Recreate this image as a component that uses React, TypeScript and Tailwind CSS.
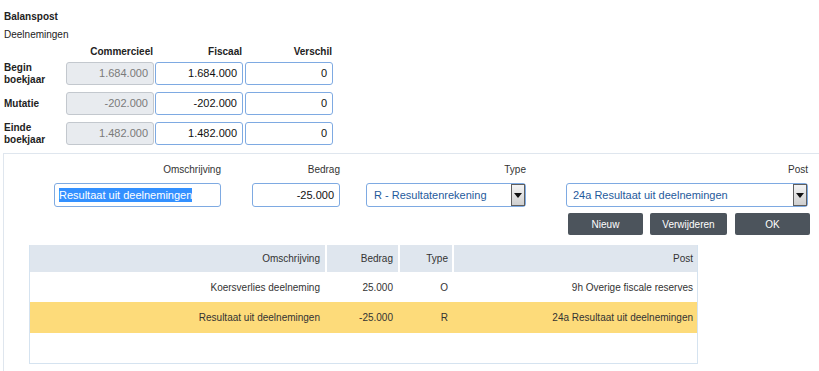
import React from 'react';

const font = { fontFamily: '"Liberation Sans", Arial, sans-serif' };

type Row = { label: string; commercieel: string; fiscaal: string; verschil: string };

const rows: Row[] = [
  { label: 'Begin boekjaar', commercieel: '1.684.000', fiscaal: '1.684.000', verschil: '0' },
  { label: 'Mutatie', commercieel: '-202.000', fiscaal: '-202.000', verschil: '0' },
  { label: 'Einde boekjaar', commercieel: '1.482.000', fiscaal: '1.482.000', verschil: '0' },
];

const items = [
  { omschrijving: 'Koersverlies deelneming', bedrag: '25.000', type: 'O', post: '9h Overige fiscale reserves', active: false },
  { omschrijving: 'Resultaat uit deelnemingen', bedrag: '-25.000', type: 'R', post: '24a Resultaat uit deelnemingen', active: true },
];

const SelectArrow: React.FC = () => (
  <div className="flex h-[22px] w-[14px] items-center justify-center border border-[#5f5f5f] bg-gradient-to-b from-[#f4f4f4] to-[#cfcfcf]">
    <svg width="8" height="5" viewBox="0 0 8 5">
      <path d="M0 0 L8 0 L4 5 Z" fill="#111" />
    </svg>
  </div>
);

export default function App() {
  return (
    <div className="h-[371px] w-[819px] overflow-hidden bg-white text-[#222]" style={font}>
      <div className="pl-[4px] pt-[11px]">
        <div className="text-[10px] font-bold leading-[12px]">Balanspost</div>
        <div className="mt-[6px] text-[10px] leading-[12px]">Deelnemingen</div>

        <div className="mt-[5px] flex text-[10px] font-bold leading-[12px]">
          <div className="w-[62px]" />
          <div className="w-[88px] pr-[1px] text-right">Commercieel</div>
          <div className="ml-[1px] w-[88px] pr-[1px] text-right">Fiscaal</div>
          <div className="ml-[1px] w-[88px] text-right">Verschil</div>
        </div>

        <div className="mt-[4px] flex flex-col gap-[7px]">
          {rows.map((r) => (
            <div key={r.label} className="flex h-[23px] items-center">
              <div className="w-[62px] text-[10px] font-bold leading-[12px]">{r.label}</div>
              <div className="flex h-[23px] w-[88px] items-center justify-end rounded-[3px] border border-[#c3c8ce] bg-[#e8ebef] pr-[5px] text-[11px] text-[#7a7a7a]">
                {r.commercieel}
              </div>
              <div className="ml-[1px] flex h-[23px] w-[88px] items-center justify-end rounded-[3px] border border-[#7eaae2] bg-white pr-[5px] text-[11px] text-[#111]">
                {r.fiscaal}
              </div>
              <div className="ml-[2px] flex h-[23px] w-[88px] items-center justify-end rounded-[3px] border border-[#7eaae2] bg-white pr-[5px] text-[11px] text-[#111]">
                {r.verschil}
              </div>
            </div>
          ))}
        </div>
      </div>

      <div className="ml-[3px] mt-[8px] h-[240px] border-l border-t border-[#dfe6ee]">
        <div className="flex pt-[10px]">
          <div className="ml-[50px] flex w-[167px] flex-col items-end">
            <div className="text-[10px] leading-[12px] text-[#333]">Omschrijving</div>
            <div className="mt-[7px] flex h-[24px] w-full items-center rounded-[3px] border border-[#7eaae2] bg-white pl-[4px] text-[11px]">
              <span className="bg-[#3390ff] leading-[14px] text-white">Resultaat uit deelnemingen</span>
            </div>
          </div>
          <div className="ml-[31px] flex w-[88px] flex-col items-end">
            <div className="text-[10px] leading-[12px] text-[#333]">Bedrag</div>
            <div className="mt-[7px] flex h-[24px] w-full items-center justify-end rounded-[3px] border border-[#7eaae2] bg-white pr-[5px] text-[11px] text-[#111]">
              -25.000
            </div>
          </div>
          <div className="ml-[26px] flex w-[160px] flex-col items-end">
            <div className="text-[10px] leading-[12px] text-[#333]">Type</div>
            <div className="mt-[7px] flex h-[24px] w-full items-center justify-between rounded-[3px] border border-[#7eaae2] bg-white pl-[7px] text-[11px] text-[#1f5a9c]">
              <span>R - Resultatenrekening</span>
              <SelectArrow />
            </div>
          </div>
          <div className="ml-[40px] flex w-[242px] flex-col items-end">
            <div className="text-[10px] leading-[12px] text-[#333]">Post</div>
            <div className="mt-[7px] flex h-[24px] w-full items-center justify-between rounded-[3px] border border-[#7eaae2] bg-white pl-[6px] text-[11px] text-[#1f5a9c]">
              <span>24a Resultaat uit deelnemingen</span>
              <SelectArrow />
            </div>
          </div>
        </div>

        <div className="ml-[564px] mt-[6px] flex text-[10px] text-white">
          <button className="flex h-[22px] w-[75px] items-center justify-center rounded-[2px] bg-[#4c545c]">Nieuw</button>
          <button className="ml-[7px] flex h-[22px] w-[77px] items-center justify-center rounded-[2px] bg-[#4c545c]">Verwijderen</button>
          <button className="ml-[8px] flex h-[22px] w-[75px] items-center justify-center rounded-[2px] bg-[#4c545c]">OK</button>
        </div>

        <div className="ml-[25px] mt-[10px] w-[669px] border-x border-b border-[#d5e3f0] text-[10px] text-[#333]">
          <div className="grid h-[27px] grid-cols-[295px_71px_52px_1fr] gap-x-[2px] bg-white">
            <div className="flex items-center justify-end bg-[#dfe6ee] pr-[5px]">Omschrijving</div>
            <div className="flex items-center justify-end bg-[#dfe6ee] pr-[5px]">Bedrag</div>
            <div className="flex items-center justify-end bg-[#dfe6ee] pr-[4px]">Type</div>
            <div className="flex items-center justify-end bg-[#dfe6ee] pr-[4px]">Post</div>
          </div>
          {items.map((it) => (
            <div
              key={it.omschrijving}
              className={`grid grid-cols-[295px_71px_52px_1fr] gap-x-[2px] ${it.active ? 'h-[31px] bg-[#fddb7a]' : 'h-[30px] bg-white'}`}
            >
              <div className="flex items-center justify-end pr-[5px]">{it.omschrijving}</div>
              <div className="flex items-center justify-end pr-[5px]">{it.bedrag}</div>
              <div className="flex items-center justify-end pr-[4px]">{it.type}</div>
              <div className="flex items-center justify-end pr-[4px]">{it.post}</div>
            </div>
          ))}
          <div className="h-[30px]" />
        </div>
      </div>
    </div>
  );
}
